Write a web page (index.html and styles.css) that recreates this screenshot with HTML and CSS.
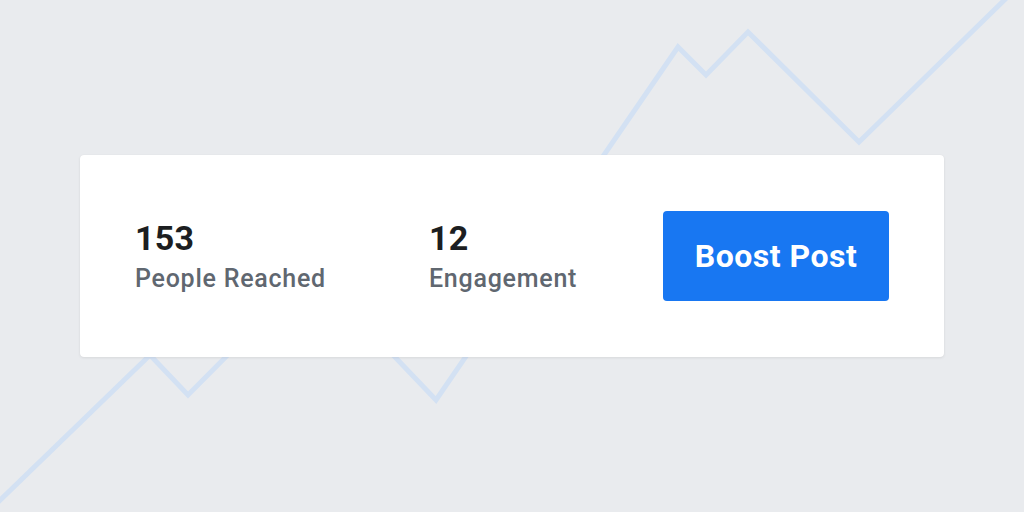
FILE: index.html
```html
<!DOCTYPE html>
<html lang="en">
<head>
<meta charset="utf-8">
<title>Boost Post</title>
<link rel="stylesheet" href="styles.css">
</head>
<body>
<svg class="chart" width="1024" height="512" viewBox="0 0 1024 512" aria-hidden="true">
  <polyline points="-5,505 150,355 188,395 312,270 436,400 678,47 706,75 748,32 859,142 1030,-25" fill="none" stroke="#d3e1f3" stroke-width="5" stroke-linejoin="miter"/>
</svg>
<main class="page">
  <section class="card">
    <div class="stat stat-reach">
      <div class="stat-value">153</div>
      <div class="stat-label">People Reached</div>
    </div>
    <div class="stat stat-engage">
      <div class="stat-value">12</div>
      <div class="stat-label">Engagement</div>
    </div>
    <button class="boost">Boost Post</button>
  </section>
</main>
</body>
</html>
```
FILE: styles.css
```css
html, body {
  margin: 0;
  padding: 0;
}
body {
  width: 1024px;
  height: 512px;
  overflow: hidden;
  background: #e9ebee;
  font-family: Roboto, "Liberation Sans", sans-serif;
  position: relative;
}
.chart {
  position: absolute;
  left: 0;
  top: 0;
  z-index: 0;
}
.page {
  position: relative;
  z-index: 1;
  padding: 155px 0 0 80px;
}
.card {
  box-sizing: border-box;
  width: 864px;
  height: 202px;
  background: #ffffff;
  border-radius: 4px;
  box-shadow: 0 1px 3px rgba(0, 0, 0, 0.08), 0 0 1px rgba(0, 0, 0, 0.06);
  display: flex;
  align-items: center;
  padding: 0 55px 0 55px;
}
.stat {
  display: flex;
  flex-direction: column;
  gap: 6px;
}
.stat-reach {
  width: 294px;
}
.stat-engage {
  flex: 1;
}
.stat-value {
  font-size: 34px;
  line-height: 40px;
  font-weight: 700;
  color: #1c1e21;
  letter-spacing: 0.3px;
}
.stat-label {
  font-size: 25px;
  line-height: 30px;
  font-weight: 500;
  color: #606770;
  letter-spacing: 0.75px;
}
.boost {
  width: 226px;
  height: 90px;
  margin-top: -1px;
  border: none;
  border-radius: 4px;
  background: #1877f2;
  color: #ffffff;
  font-family: Roboto, "Liberation Sans", sans-serif;
  font-size: 32px;
  font-weight: 700;
  letter-spacing: 0.5px;
  padding: 0;
}
```
